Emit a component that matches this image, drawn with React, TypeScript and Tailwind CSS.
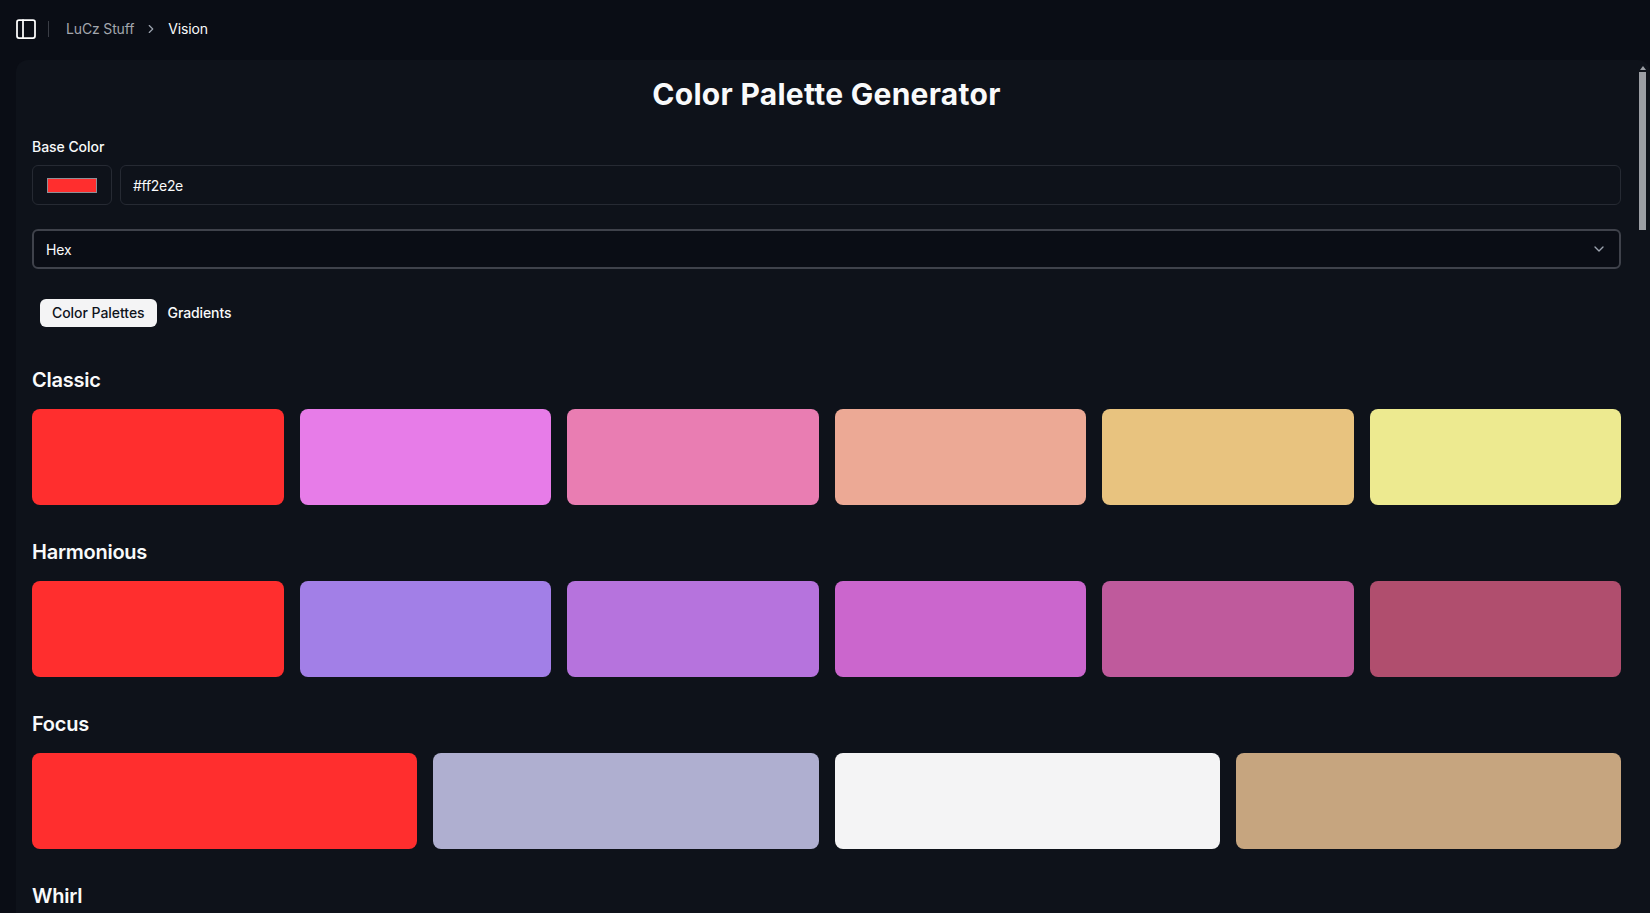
import { ChevronDown, ChevronRight, PanelLeft } from "lucide-react";

const font = "font-['Inter','Liberation_Sans',sans-serif]";

type PaletteProps = {
  title: string;
  colors: string[];
  cols: string;
};

function Palette({ title, colors, cols }: PaletteProps) {
  return (
    <section className="mt-[33px]">
      <h2 className="text-[20px] leading-[28px] font-semibold tracking-[-0.25px] text-[#f9fafb]">{title}</h2>
      <div className={`mt-[15px] grid gap-4 ${cols}`}>
        {colors.map((color, i) => (
          <div key={i} className="h-[96px] rounded-lg" style={{ backgroundColor: color }} />
        ))}
      </div>
    </section>
  );
}

export default function App() {
  return (
    <div className={`flex h-[913px] flex-col overflow-hidden bg-[#0a0d15] ${font}`}>
      <header className="flex h-[60px] shrink-0 items-center pr-[16px] pb-[2px] pl-[14px]">
        <PanelLeft className="h-[24px] w-[24px] text-white" strokeWidth={1.75} />
        <div className="mr-[17px] ml-[10px] h-[16px] w-px bg-[#3a3d45]" />
        <nav className="flex items-center gap-[10px] text-[14px] leading-[20px] tracking-[-0.15px]">
          <span className="text-[#a3a6ad]">LuCz Stuff</span>
          <ChevronRight className="h-[14px] w-[14px] text-[#9ca3af]" />
          <span className="text-[#f9fafb]">Vision</span>
        </nav>
      </header>
      <main className="relative ml-[16px] flex-1 overflow-hidden rounded-tl-xl rounded-tr-xl bg-[#0e121a] pr-[29px] pl-[16px]">
        <div className="absolute top-[6px] right-[4px] flex w-[7px] flex-col items-center">
          <div className="mb-[2px] h-0 w-0 border-x-[3px] border-b-[4px] border-x-transparent border-b-[#9b9ea4]" />
          <div className="h-[158px] w-[7px] bg-[#9b9ea4]" />
        </div>
        <h1 className="mt-[16px] text-center text-[30px] leading-[36px] font-bold tracking-[0.28px] text-[#f9fafb]">
          Color Palette Generator
        </h1>
        <label className="mt-[25px] block text-[14px] leading-[20px] font-medium tracking-[-0.05px] text-[#f9fafb]">
          Base Color
        </label>
        <div className="mt-[8px] flex gap-[8px]">
          <div className="flex h-[40px] w-[80px] shrink-0 items-center justify-center rounded-md border border-[#262a33]">
            <div className="h-[15px] w-[50px] border border-[#8f8f96] bg-[#ff2e2e]" />
          </div>
          <div className="flex h-[40px] flex-1 items-center rounded-md border border-[#262a33] px-[12px] text-[14px] tracking-[-0.3px] text-[#f9fafb]">
            #ff2e2e
          </div>
        </div>
        <button className="mt-[24px] flex h-[40px] w-full items-center justify-between rounded-md border-2 border-[#3f424b] bg-[#0a0d15] px-[12px] text-[14px] tracking-[-0.15px] text-[#f9fafb]">
          Hex
          <ChevronDown className="h-[16px] w-[16px] text-[#9ca3af]" />
        </button>
        <div className="mt-[24px] inline-flex h-[40px] items-center gap-[4px] px-[8px] text-[14px] font-medium tracking-[-0.05px]">
          <span className="rounded-md bg-[#f4f4f5] px-[12px] py-[4px] leading-[20px] text-[#0f131b]">Color Palettes</span>
          <span className="px-[7px] py-[4px] leading-[20px] tracking-[-0.1px] text-[#f9fafb]">Gradients</span>
        </div>
        <Palette
          title="Classic"
          cols="grid-cols-6"
          colors={["#ff2e2e", "#e77ce8", "#e97db2", "#eca995", "#e8c37f", "#edea90"]}
        />
        <Palette
          title="Harmonious"
          cols="grid-cols-6"
          colors={["#ff2e2e", "#a27fe7", "#b673dd", "#cb66cd", "#bf5a9c", "#b04e6e"]}
        />
        <Palette
          title="Focus"
          cols="grid-cols-4"
          colors={["#ff2e2e", "#afafd0", "#f4f4f5", "#c6a57f"]}
        />
        <Palette
          title="Whirl"
          cols="grid-cols-6"
          colors={["#ff2e2e", "#ff2e2e", "#ff2e2e", "#ff2e2e", "#ff2e2e", "#ff2e2e"]}
        />
      </main>
    </div>
  );
}
